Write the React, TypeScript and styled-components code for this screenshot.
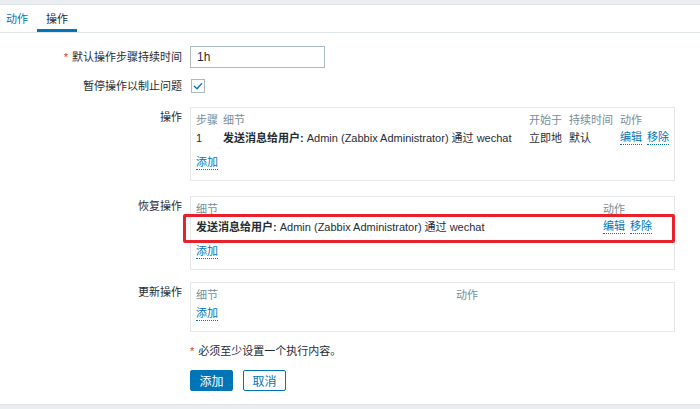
import React from 'react';
import styled, { createGlobalStyle } from 'styled-components';

const GlobalStyle = createGlobalStyle`
  html, body { margin: 0; padding: 0; background: #fff; }
  body {
    font-family: "Liberation Sans", "Noto Sans CJK SC", sans-serif;
    font-size: 11px;
    color: #1f2c33;
  }
  * { box-sizing: border-box; }
`;

const Page = styled.div`
  display: flex;
  flex-direction: column;
  height: 409px;
  overflow: hidden;
`;

const TopBand = styled.div`
  flex: none;
  height: 5px;
  background: #ebeef0;
  border-bottom: 1px solid #dfe4e7;
`;

const TabBar = styled.div`
  flex: none;
  display: flex;
  height: 28px;
  border-bottom: 1px solid #dfe4e7;
`;

const Tab = styled.div<{ $active?: boolean; $first?: boolean }>`
  display: flex;
  align-items: center;
  padding: 0 9px 0 ${p => (p.$first ? 6 : 9)}px;
  border-top: 3px solid transparent;
  border-bottom: 3px solid ${p => (p.$active ? '#0275b8' : 'transparent')};
  color: ${p => (p.$active ? '#1f2c33' : '#0275b8')};
  line-height: 14px;
`;

const Main = styled.div`
  flex: 1;
  padding-top: 13px;
`;

const FormRow = styled.div<{ $mt?: number }>`
  display: grid;
  grid-template-columns: 182px auto;
  column-gap: 8px;
  margin-top: ${p => p.$mt ?? 0}px;
`;

const Label = styled.div<{ $top?: boolean }>`
  text-align: right;
  line-height: 14px;
  align-self: ${p => (p.$top ? 'start' : 'center')};
  padding-top: ${p => (p.$top ? 3 : 0)}px;
  white-space: nowrap;
`;

const Asterisk = styled.span`
  color: #e33734;
  margin-right: 4px;
`;

const TextInput = styled.div`
  width: 135px;
  height: 22px;
  border: 1px solid #acbbc2;
  padding: 0 6px;
  display: flex;
  align-items: center;
  font-size: 12px;
`;

const CheckboxWrap = styled.div`
  height: 16px;
  display: flex;
  align-items: center;
  padding-left: 1px;
`;

const CheckBox = styled.div`
  width: 14px;
  height: 14px;
  border: 1px solid #acbbc2;
  background: #fff;
  display: flex;
  align-items: center;
  justify-content: center;
`;

const Box = styled.div`
  width: 485px;
  border: 1px solid #e5e8ea;
  padding: 3px 5px 7px 5px;
`;

const TableRow = styled.div<{ $cols: string; $head?: boolean; $h: number }>`
  position: relative;
  display: grid;
  grid-template-columns: ${p => p.$cols};
  height: ${p => p.$h}px;
  align-items: center;
  color: ${p => (p.$head ? '#768d99' : '#1f2c33')};
  line-height: 14px;
  white-space: nowrap;
`;

const Bold = styled.span`
  font-weight: bold;
`;

const LinkGroup = styled.div`
  display: flex;
  gap: 5px;
`;

const Link = styled.span`
  color: #0275b8;
  border-bottom: 1px dotted #0275b8;
  line-height: 13px;
`;

const AddRow = styled.div<{ $mt: number }>`
  height: 20px;
  margin-top: ${p => p.$mt}px;
  display: flex;
  align-items: center;
`;

const Highlight = styled.div`
  position: absolute;
  left: -13px;
  right: -6px;
  top: -3px;
  bottom: -6px;
  border: 3px solid #e8212b;
  border-radius: 2px;
  pointer-events: none;
`;

const Note = styled.div`
  line-height: 14px;
  margin-top: 12px;
`;

const Buttons = styled.div`
  display: flex;
  gap: 10px;
  margin-top: 12px;
`;

const Button = styled.div<{ $primary?: boolean }>`
  width: 43px;
  height: 21px;
  display: flex;
  align-items: center;
  justify-content: center;
  border: 1px solid #0275b8;
  border-radius: 2px;
  background: ${p => (p.$primary ? '#0275b8' : '#fff')};
  color: ${p => (p.$primary ? '#fff' : '#0275b8')};
  font-size: 12px;
`;

const BottomBand = styled.div`
  flex: none;
  height: 5px;
  background: #ebeef0;
  border-top: 1px solid #dfe4e7;
`;

const Spacer = styled.div``;

const OPS_COLS = '27px 306px 40px 51px 1fr';
const REC_COLS = '407px 1fr';
const UPD_COLS = '260px 1fr';

const Message = () => (
  <span>
    <Bold>发送消息给用户:</Bold> Admin (Zabbix Administrator) 通过 wechat
  </span>
);

export default function App() {
  return (
    <>
      <GlobalStyle />
      <Page>
        <TopBand />
        <TabBar>
          <Tab $first>动作</Tab>
          <Tab $active>操作</Tab>
        </TabBar>
        <Main>
          <FormRow>
            <Label><Asterisk>*</Asterisk>默认操作步骤持续时间</Label>
            <TextInput>1h</TextInput>
          </FormRow>
          <FormRow $mt={10}>
            <Label>暂停操作以制止问题</Label>
            <CheckboxWrap>
              <CheckBox>
                <svg width="10" height="8" viewBox="0 0 10 8">
                  <polyline points="1,4 4,6.8 9,1.2" fill="none" stroke="#0275b8" strokeWidth="1.3" />
                </svg>
              </CheckBox>
            </CheckboxWrap>
          </FormRow>
          <FormRow $mt={13}>
            <Label $top>操作</Label>
            <Box>
              <TableRow $cols={OPS_COLS} $head $h={17}>
                <span>步骤</span><span>细节</span><span>开始于</span><span>持续时间</span><span>动作</span>
              </TableRow>
              <TableRow $cols={OPS_COLS} $h={20}>
                <span>1</span>
                <Message />
                <span>立即地</span>
                <span>默认</span>
                <LinkGroup><Link>编辑</Link><Link>移除</Link></LinkGroup>
              </TableRow>
              <AddRow $mt={5}><Link>添加</Link></AddRow>
            </Box>
          </FormRow>
          <FormRow $mt={15}>
            <Label $top>恢复操作</Label>
            <Box>
              <TableRow $cols={REC_COLS} $head $h={17}>
                <span>细节</span><span>动作</span>
              </TableRow>
              <TableRow $cols={REC_COLS} $h={20}>
                <Message />
                <LinkGroup><Link>编辑</Link><Link>移除</Link></LinkGroup>
                <Highlight />
              </TableRow>
              <AddRow $mt={5}><Link>添加</Link></AddRow>
            </Box>
          </FormRow>
          <FormRow $mt={12}>
            <Label $top>更新操作</Label>
            <Box>
              <TableRow $cols={UPD_COLS} $head $h={17}>
                <span>细节</span><span>动作</span>
              </TableRow>
              <AddRow $mt={1}><Link>添加</Link></AddRow>
            </Box>
          </FormRow>
          <FormRow>
            <Spacer />
            <div>
              <Note><Asterisk>*</Asterisk>必须至少设置一个执行内容。</Note>
              <Buttons>
                <Button $primary>添加</Button>
                <Button>取消</Button>
              </Buttons>
            </div>
          </FormRow>
        </Main>
        <BottomBand />
      </Page>
    </>
  );
}
